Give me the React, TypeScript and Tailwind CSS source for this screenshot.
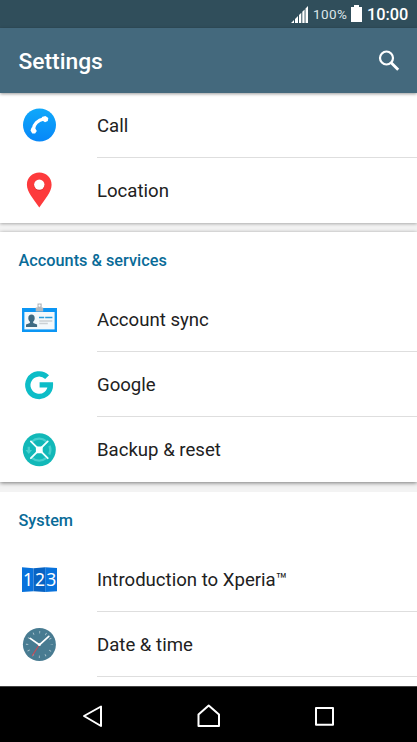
import type { ReactNode } from "react";
import { clsx } from "clsx";

interface SettingItem {
  label: string;
  icon: ReactNode;
}

function Icon({ children }: { children: ReactNode }) {
  return (
    <svg viewBox="0 0 40 40" className="w-10 h-10 shrink-0">
      {children}
    </svg>
  );
}

function CallIcon() {
  return (
    <Icon>
      <defs>
        <linearGradient id="call" x1="0" y1="0" x2="0" y2="1">
          <stop offset="0" stopColor="#0fa8fa" />
          <stop offset="1" stopColor="#0787f8" />
        </linearGradient>
      </defs>
      <circle cx="20.5" cy="20" r="16.5" fill="url(#call)" />
      <path d="M14.4 24C14.8 19.5 18.5 15 25 13.8" stroke="#fff" strokeWidth="3.3" fill="none" />
      <path d="M22.8 12 26.4 11.1 29.3 13 28.8 15.9 26 17.3 23.4 15.6Z" fill="#fff" />
      <path d="M12.6 22.6 16.3 23.4 17.8 26 16.1 28.6 13.3 28.6 11.5 25.6Z" fill="#fff" />
    </Icon>
  );
}

function LocationIcon() {
  return (
    <Icon>
      <path d="M20.3 2.6C13.3 2.6 7.9 7.8 7.9 14.7c0 7.4 6.8 14.3 12.4 22.9 5.6-8.6 12.3-15.5 12.3-22.9 0-6.9-5.3-12.1-12.3-12.1Z" fill="#fd3a3c" />
      <circle cx="20.3" cy="15.2" r="5.5" fill="#d92d30" />
      <circle cx="20.3" cy="14.6" r="5.2" fill="#fff" />
    </Icon>
  );
}

function AccountIcon() {
  return (
    <Icon>
      <rect x="3" y="9" width="35" height="24" fill="#0c96f4" />
      <rect x="5.4" y="13" width="30.2" height="17.4" fill="#f3f8fb" />
      <path d="M18.5 4.5h4.2v4h1.5v4h-7.5v-4h1.8Z" fill="#b3b8bc" />
      <circle cx="20.5" cy="6.7" r="1.1" fill="#fff" />
      <path d="M9.3 19.3c0-2.6 1.2-3.8 3.2-3.8s3.2 1.2 3.2 3.8c0 1.5-.6 2.7-1.5 3.4v1.3l3.9 1.6V28H7v-2.4l3.9-1.6v-1.3c-1-.7-1.6-1.9-1.6-3.4Z" fill="#3e6a82" />
      <path d="M20 18.5h5.2M26.2 18.5h7.2" stroke="#269ddd" strokeWidth="1.5" />
      <path d="M20.3 22h13M20.3 24.5h8.5" stroke="#cbd0d4" strokeWidth="1.3" />
    </Icon>
  );
}

function GoogleIcon() {
  return (
    <Icon>
      <path d="M28.1 13.2A11.3 11.3 0 1 0 31.4 20.9H20.6" fill="none" stroke="#0dbdc7" strokeWidth="5.4" />
    </Icon>
  );
}

function BackupIcon() {
  return (
    <Icon>
      <g transform="translate(0 .8)">
        <circle cx="20.3" cy="20" r="16.5" fill="#12b8b8" />
        <path d="M13 11.700a10.800 10.800 0 0 1 14 -.4M30.500 15.900a10.800 10.800 0 0 1-.2 8.700M27 28.300a10.800 10.800 0 0 1-13.800 0M9.800 16.900v5" fill="none" stroke="#48cfce" strokeWidth="2.3" />
        <path d="M6.500 20.200h6.600l-3.300 4Z" fill="#48cfce" />
        <path d="m11.900 11.600 16.800 16.800M28.700 11.600 11.900 28.400" stroke="#f1ffff" strokeWidth="1.9" strokeLinecap="round" />
        <rect x="16.9" y="16.6" width="6.8" height="6.8" rx="1" fill="#fff" />
      </g>
    </Icon>
  );
}

function IntroIcon() {
  return (
    <Icon>
      <path d="M3 8.3 14.5 9.3V32.2L3 33Z" fill="#0872dc" />
      <path d="M14.5 9.3 26.2 8.3V33L14.5 32.2Z" fill="#0863c3" />
      <path d="M26.2 8.3 38 9V32.3L26.2 33Z" fill="#0872dc" />
      <g fontSize="17.5" fill="#fff" className="font-['Noto_Sans',sans-serif]">
        <text x="4" y="27">1</text>
        <text x="16" y="27">2</text>
        <text x="27.2" y="27">3</text>
      </g>
    </Icon>
  );
}

function ClockIcon() {
  return (
    <Icon>
      <g transform="translate(0 .8)">
        <circle cx="20.4" cy="19.7" r="16.5" fill="#487b91" />
        <circle cx="20.4" cy="19.7" r="12.3" fill="none" stroke="#b4cad3" strokeWidth="2.4" strokeDasharray="0.8 5.64" strokeDashoffset="0.4" />
        <path d="M20.400 19.700 13.200 31" stroke="#c54b59" strokeWidth="1.2" />
        <path d="m11.200 13.600 9.200 6.400 9.400-8.400" fill="none" stroke="#fff" strokeWidth="1.7" strokeLinecap="round" />
        <circle cx="20.4" cy="19.9" r="1.4" fill="#fff" />
      </g>
    </Icon>
  );
}

const general: SettingItem[] = [
  { label: "Call", icon: <CallIcon /> },
  { label: "Location", icon: <LocationIcon /> },
];

const accounts: SettingItem[] = [
  { label: "Account sync", icon: <AccountIcon /> },
  { label: "Google", icon: <GoogleIcon /> },
  { label: "Backup & reset", icon: <BackupIcon /> },
];

const system: SettingItem[] = [
  { label: "Introduction to Xperia™", icon: <IntroIcon /> },
  { label: "Date & time", icon: <ClockIcon /> },
];

interface SectionProps {
  title?: string;
  items: SettingItem[];
  open?: boolean;
  className?: string;
}

function Section({ title, items, open, className }: SectionProps) {
  return (
    <section className={clsx("bg-white", className)}>
      {title && <h2 className="pl-[18.5px] pt-[17px] h-[55px] text-[16.3px] leading-6 font-medium text-[#096b98]">{title}</h2>}
      {items.map((item, i) => (
        <div key={item.label} className="flex h-[65px] pl-[19px]">
          <div className="pt-3">{item.icon}</div>
          <div
            className={clsx(
              "ml-[38px] flex-1 border-b pt-[21px] text-[18.6px] leading-6 text-[#212121]",
              open || i < items.length - 1 ? "border-[#dedede]" : "border-transparent"
            )}
          >
            {item.label}
          </div>
        </div>
      ))}
    </section>
  );
}

function StatusBar() {
  return (
    <div className="flex h-7 shrink-0 items-start bg-[#304e5b] pl-[291px] text-white">
      <svg viewBox="0 0 18 17" className="mt-1.5 h-[17px] w-[18px] shrink-0">
        <path d="M0 17 3 14v3ZM4 17v-4l3-3v7ZM8 17V9l2.300-2.300V17ZM11.300 17V5.700L13.600 3.400V17ZM14.500 17V2.500L17 0v17Z" fill="#fff" />
      </svg>
      <span className="ml-1 w-[35px] pt-[5px] text-[13.5px] leading-[18px] tracking-[0.4px] text-[#dce5e9]">100%</span>
      <svg viewBox="0 0 11 17" className="ml-[3px] mt-[5px] h-[17px] w-[11px] shrink-0">
        <path d="M3 0h5v2h3v15H0V2h3Z" fill="#fff" />
      </svg>
      <span className="ml-[5px] pt-[2.5px] text-[16.3px] leading-6 font-medium">10:00</span>
    </div>
  );
}

function Header() {
  return (
    <header className="z-10 flex h-[65px] shrink-0 items-start justify-between bg-[#44697d] pl-[18.5px] pr-[17px] shadow-[0_1px_3px_rgba(0,0,0,0.4)]">
      <h1 className="pt-[18px] text-[22.8px] leading-8 font-medium text-white">Settings</h1>
      <svg viewBox="0 0 22 22" className="mt-[21.5px] h-[22px] w-[22px]">
        <circle cx="8.5" cy="8" r="6.5" fill="none" stroke="#fff" strokeWidth="2.2" />
        <path d="m13.200 12.800 7 7" stroke="#fff" strokeWidth="2.8" />
      </svg>
    </header>
  );
}

function NavBar() {
  return (
    <nav className="flex h-14 shrink-0 items-start justify-between border-t border-[#444] bg-black pl-[82px] pr-[82px] pt-4">
      <svg viewBox="0 0 22 26" className="h-[26px] w-[22px]" fill="none" stroke="#fff" strokeWidth="2" strokeLinejoin="round">
        <path d="M2 13 19 3.500V23Z" />
      </svg>
      <svg viewBox="0 0 24 26" className="h-[26px] w-6" fill="none" stroke="#fff" strokeWidth="2" strokeLinejoin="round">
        <path d="M1.500 11.500 11.700 2.500 22 11.500v11.500H1.500Z" />
      </svg>
      <svg viewBox="0 0 22 26" className="h-[26px] w-[22px]" fill="none" stroke="#fff" strokeWidth="2" strokeLinejoin="round">
        <rect x="3" y="5" width="17" height="16.8" />
      </svg>
    </nav>
  );
}

export default function App() {
  return (
    <div className="flex h-[742px] w-[417px] flex-col overflow-hidden bg-[#f3f3f3] font-[Roboto,sans-serif]">
      <StatusBar />
      <Header />
      <main className="flex min-h-0 flex-1 flex-col gap-[9px] overflow-hidden">
        <Section items={general} className="shrink-0 shadow-[0_1px_3px_rgba(0,0,0,0.3)]" />
        <Section title="Accounts & services" items={accounts} className="shrink-0 shadow-[0_1px_4px_rgba(0,0,0,0.5)]" />
        <Section title="System" items={system} open className="mt-px flex-1" />
      </main>
      <NavBar />
    </div>
  );
}
